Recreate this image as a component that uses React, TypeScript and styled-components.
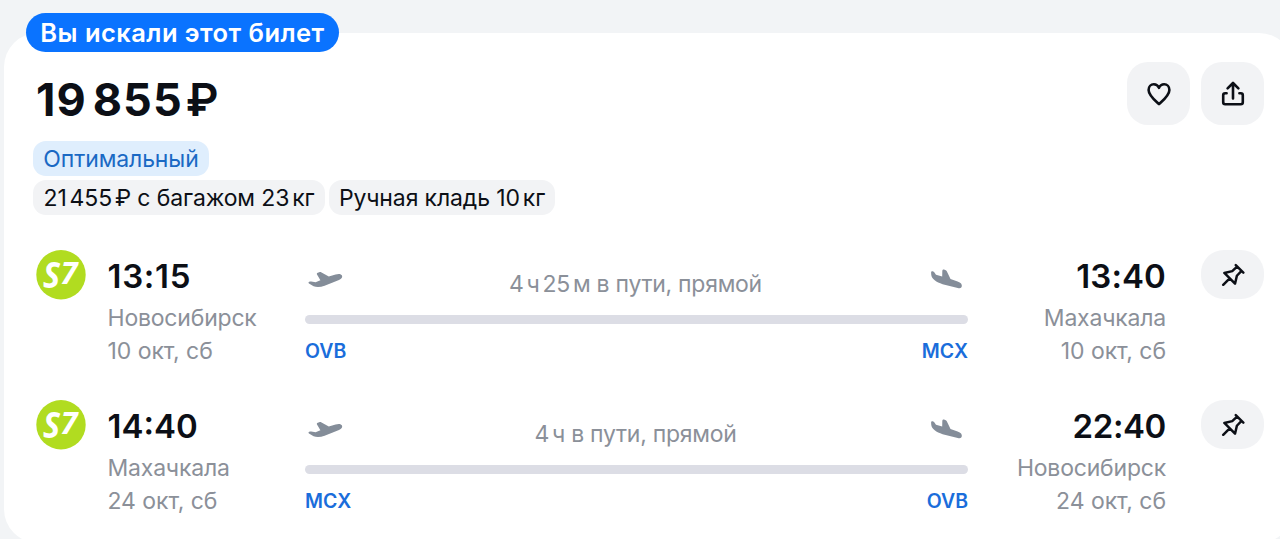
import React from 'react';
import styled, { createGlobalStyle } from 'styled-components';

const GlobalStyle = createGlobalStyle`
  * {
    box-sizing: border-box;
  }
  body {
    margin: 0;
    background-color: #f2f4f6;
    font-family: Inter, sans-serif;
    color: #0c0f16;
    overflow: hidden;
  }
`;

const Page = styled.div`
  width: 1280px;
  height: 539px;
  padding: 33px 0 0 4px;
  overflow: hidden;
`;

const Card = styled.div`
  position: relative;
  width: 1289px;
  height: 510px;
  padding: 29px 29px 0 29px;
  border-radius: 34px;
  background-color: #ffffff;
`;

const Badge = styled.div`
  position: absolute;
  top: -20px;
  left: 22px;
  width: 313px;
  height: 39px;
  border-radius: 20px;
  background-color: #0a73ff;
  color: #ffffff;
  font-size: 25.5px;
  font-weight: 600;
  letter-spacing: 0.45px;
  line-height: 40px;
  text-align: center;
  white-space: nowrap;
`;

const Header = styled.div`
  display: flex;
  justify-content: space-between;
  width: 1231px;
  height: 79px;
`;

const Price = styled.div`
  padding-left: 3px;
  font-size: 45px;
  font-weight: 700;
  letter-spacing: 1px;
  line-height: 76px;
  white-space: pre;
`;

const Ruble = styled.span`
  font-weight: 600;
`;

const Actions = styled.div`
  display: flex;
  gap: 11px;
`;

const IconButton = styled.button<{ $height: number }>`
  display: flex;
  align-items: center;
  justify-content: center;
  width: 63px;
  height: ${(p) => p.$height}px;
  padding: 0;
  border: none;
  border-radius: ${(p) => (p.$height > 60 ? 21 : 23)}px;
  background-color: #f2f3f5;
  color: #0c0f16;
`;

const Tags = styled.div`
  display: flex;
  gap: 4px;
  height: 39px;
`;

const Tag = styled.div<{ $width: number; $accent?: boolean }>`
  width: ${(p) => p.$width}px;
  height: 35px;
  border-radius: 13px;
  background-color: ${(p) => (p.$accent ? '#dfeefd' : '#f2f3f5')};
  color: ${(p) => (p.$accent ? '#1a69c4' : '#0c0f16')};
  font-size: 23px;
  letter-spacing: -0.12px;
  line-height: 36px;
  text-align: center;
  white-space: pre;
`;

const Thin = styled.span<{ $tight?: number }>`
  letter-spacing: ${(p) => -(p.$tight ?? 0.055)}em;
`;

const Legs = styled.div`
  display: flex;
  flex-direction: column;
  gap: 26px;
  margin-top: 31px;
`;

const Leg = styled.div`
  display: grid;
  grid-template-columns: 50px 219px 663px 198px 98px;
  width: 1231px;
  height: 124px;
  padding-left: 3px;
  justify-content: start;
`;

const Stop = styled.div<{ $end?: boolean }>`
  display: flex;
  flex-direction: column;
  padding-left: ${(p) => (p.$end ? 0 : 21.5)}px;
  text-align: ${(p) => (p.$end ? 'right' : 'left')};
  white-space: nowrap;
`;

const Time = styled.div<{ $spacing: number }>`
  height: 51px;
  font-size: 33px;
  font-weight: 600;
  letter-spacing: ${(p) => p.$spacing}px;
  line-height: 53px;
`;

const City = styled.div`
  height: 33px;
  color: #8b9099;
  font-size: 23px;
  letter-spacing: -0.2px;
  line-height: 34px;
`;

const FlightDate = styled(City)`
  letter-spacing: -0.05px;
`;

const Route = styled.div`
  display: flex;
  flex-direction: column;
`;

const RouteTop = styled.div`
  display: flex;
  justify-content: space-between;
  height: 65px;
  padding: 17px 5px 0 3px;
`;

const Duration = styled.div`
  color: #8b9099;
  font-size: 23px;
  letter-spacing: -0.27px;
  line-height: 34px;
  white-space: pre;
`;

const Line = styled.div`
  height: 9px;
  border-radius: 5px;
  background-color: #dcdde5;
`;

const Codes = styled.div`
  display: flex;
  justify-content: space-between;
  color: #1a6ddb;
  font-size: 19.5px;
  font-weight: 600;
  line-height: 54px;
`;

const Pin = styled.div`
  display: flex;
  justify-content: flex-end;
`;

const HeartIcon = () => (
  <svg width="26" height="26" viewBox="0 0 26 26" fill="none" stroke="currentColor" strokeWidth="2.6" strokeLinejoin="round">
    <path d="M13 23.2C10 20.2 2.6 14.4 2.6 8.9C2.6 5.6 5 3.2 7.8 3.2C10.2 3.2 12.1 4.6 13 6.9C13.9 4.6 15.8 3.2 18.2 3.2C21 3.2 23.4 5.6 23.4 8.9C23.4 14.4 16 20.2 13 23.2Z" />
  </svg>
);

const ShareIcon = () => (
  <svg width="26" height="26" viewBox="0 0 26 26" fill="none" stroke="currentColor" strokeWidth="2.6" strokeLinecap="round" strokeLinejoin="round">
    <path d="M13 17.5V2.4M7.6 7.4L13 2L18.4 7.4" />
    <path d="M6.6 12.2H5.2Q3.2 12.2 3.2 14.2V21.2Q3.2 23.2 5.2 23.2H20.8Q22.8 23.2 22.8 21.2V14.2Q22.8 12.2 20.8 12.2H19.4" />
  </svg>
);

const PinIcon = () => (
  <svg width="24" height="24" viewBox="0 0 26 26" fill="none" stroke="currentColor" strokeWidth="2.7" strokeLinecap="round" strokeLinejoin="round">
    <path d="M16 2.2L24.2 10.4M17.4 4L12.2 8.8L3.6 10.8L15.2 22.4L17.2 13.8L22 8.8M9.4 16.6L2.4 23.6" />
  </svg>
);

const TakeoffIcon = () => (
  <svg width="36" height="24" viewBox="0 0 36 24" fill="#848d99">
    <path d="M.6 15.2C1 14.3 2.2 14.2 3.2 14.6L7.6 15.3L12.4 13.2L9 7.6C8.6 6.8 8.9 6 9.8 5.7L11.2 5.2C12 4.9 12.8 5 13.5 5.4L20.8 9.5L27.6 7.5C30.8 6.5 33.2 6.9 34 8.6C34.7 10.4 33.6 11.8 31 12.9L16.6 18.8C12.6 20.3 8.6 20.6 5.6 19.3L1.4 16.8C.7 16.4 .3 15.8 .6 15.2Z" />
  </svg>
);

const LandingIcon = () => (
  <svg width="36" height="24" viewBox="0 0 36 24" fill="#848d99">
    <path d="M4.1 5.2C4.1 4.3 4.8 3.9 5.7 4.3C6.8 4.7 7.5 5.4 8.1 6.4L9 7.8L15.2 9.4L15.3 4.2C15.3 2.9 15.9 2.4 17 2.6L18.2 2.9C19 3.1 19.5 3.5 19.8 4.3L23.5 12L30.6 14.4C33.9 15.6 35.2 17.2 34.8 19.3C34.5 21.1 33.1 21.5 30.8 21L15.6 17.2C9.4 15.3 4.6 12.2 4.2 7.6Z" />
  </svg>
);

const AirlineLogo = () => (
  <svg width="50" height="50" viewBox="0 0 50 50">
    <circle cx="25" cy="24.8" r="24.7" fill="#b1dc20" />
    <g fill="#ffffff" fontFamily="Open Sans, sans-serif" fontWeight="700" fontStyle="italic">
      <text x="7" y="37.5" fontSize="35" textLength="17" lengthAdjust="spacingAndGlyphs">S</text>
      <text x="24.5" y="33.5" fontSize="30" textLength="17" lengthAdjust="spacingAndGlyphs">7</text>
    </g>
  </svg>
);

// Units sit closer to their numbers than a full space
const withThinSpaces = (text: string) =>
  text.split(/(\u2009)/).map((part, i) => (part === '\u2009' ? <Thin key={i}>{part}</Thin> : part));

const legs = [
  {
    depart: '13:15',
    departSpacing: 0.7,
    arrive: '13:40',
    arriveSpacing: 0.1,
    from: 'Новосибирск',
    to: 'Махачкала',
    date: '10 окт, сб',
    duration: '4\u2009ч\u200925\u2009м в пути, прямой',
    fromCode: 'OVB',
    toCode: 'MCX',
  },
  {
    depart: '14:40',
    departSpacing: 0,
    arrive: '22:40',
    arriveSpacing: -0.4,
    from: 'Махачкала',
    to: 'Новосибирск',
    date: '24 окт, сб',
    duration: '4\u2009ч в пути, прямой',
    fromCode: 'MCX',
    toCode: 'OVB',
  },
];

function App() {
  return (
    <Page>
      <GlobalStyle />
      <Card>
        <Badge>Вы искали этот билет</Badge>
        <Header>
          <Price>
            19
            <Thin $tight={0.02}>{'\u2009'}</Thin>
            855
            <Thin $tight={0.09}>{'\u2009'}</Thin>
            <Ruble>₽</Ruble>
          </Price>
          <Actions>
            <IconButton $height={63}><HeartIcon /></IconButton>
            <IconButton $height={63}><ShareIcon /></IconButton>
          </Actions>
        </Header>
        <Tags>
          <Tag $width={176} $accent>Оптимальный</Tag>
        </Tags>
        <Tags>
          <Tag $width={292}>{withThinSpaces('21\u2009455\u2009₽ с багажом 23\u2009кг')}</Tag>
          <Tag $width={226}>{withThinSpaces('Ручная кладь 10\u2009кг')}</Tag>
        </Tags>
        <Legs>
          {legs.map((leg) => (
            <Leg key={leg.depart}>
              <AirlineLogo />
              <Stop>
                <Time $spacing={leg.departSpacing}>{leg.depart}</Time>
                <City>{leg.from}</City>
                <FlightDate>{leg.date}</FlightDate>
              </Stop>
              <Route>
                <RouteTop>
                  <TakeoffIcon />
                  <Duration>{withThinSpaces(leg.duration)}</Duration>
                  <LandingIcon />
                </RouteTop>
                <Line />
                <Codes>
                  <span>{leg.fromCode}</span>
                  <span>{leg.toCode}</span>
                </Codes>
              </Route>
              <Stop $end>
                <Time $spacing={leg.arriveSpacing}>{leg.arrive}</Time>
                <City>{leg.to}</City>
                <FlightDate>{leg.date}</FlightDate>
              </Stop>
              <Pin>
                <IconButton $height={49}><PinIcon /></IconButton>
              </Pin>
            </Leg>
          ))}
        </Legs>
      </Card>
    </Page>
  );
}

export default App;
